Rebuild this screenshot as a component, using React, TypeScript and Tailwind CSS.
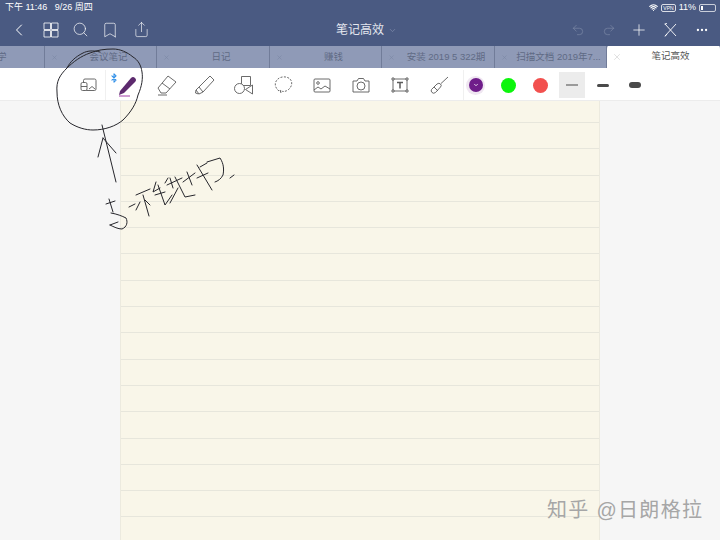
import { ChevronLeft, ChevronDown, Search, Bookmark, Share, Undo2, Redo2, Plus, Wifi, X, Ellipsis, Bluetooth } from 'lucide-react'

const tabs = [
  { title: '学', width: 'w-[45px]', align: 'justify-start', showClose: false },
  { title: '会议笔记', width: 'w-[112px]', align: 'justify-center', showClose: true },
  { title: '日记', width: 'w-[113px]', align: 'justify-center', showClose: true },
  { title: '赚钱', width: 'w-[112px]', align: 'justify-center', showClose: true },
  { title: '安装 2019 5 322期', width: 'w-[113px]', align: 'justify-center', showClose: true },
  { title: '扫描文档 2019年7...', width: 'w-[112px]', align: 'justify-center', showClose: true },
]

function Icon({ children, w = 24, h = 24 }: { children: React.ReactNode; w?: number; h?: number }) {
  return (
    <svg width={w} height={h} viewBox={`0 0 ${w} ${h}`} fill="none" stroke="#5a5a5a" strokeWidth="0.9" strokeLinejoin="round" className="shrink-0">
      {children}
    </svg>
  )
}

function Tools() {
  return (
    <div className="flex items-center h-full pl-[80px] pt-[2px]">
      <Icon w={17} h={14}>
        <rect x="3.500" y="1" width="12.500" height="11.500" rx="1.500" />
        <rect x="1" y="4.500" width="6" height="8" rx="1.500" fill="#fff" />
        <path d="M1 8.500h6M9 11l3-2.500 3 2.500" />
      </Icon>
      <div className="w-px h-[30px] bg-[#f0f0f0] ml-[8px]" />
      <div className="relative w-[38px] h-full flex items-center justify-center">
        <Bluetooth size={10} strokeWidth={2.5} className="absolute left-[3px] top-[3px] text-[#2f8fe8]" />
        <svg width="20" height="22" viewBox="0 0 20 22" className="mt-[2px] ml-[6px]">
          <path d="M2 16 L13 3 Q15 1 17 3 Q19 5 17 7 L6 18 L1 20 Z" fill="#5d2a6e" />
          <path d="M1 21h11" stroke="#a03ca8" strokeWidth="1" />
        </svg>
      </div>
      <div className="ml-[12px]">
        <Icon w={22} h={22}>
          <path d="M2 14 L12 2 L20 8 L10 19 H5 Z M6 9 L14 15" />
          <path d="M2 21h9" />
        </Icon>
      </div>
      <div className="ml-[17px]">
        <Icon w={20} h={22}>
          <path d="M1 16l3 4 4-2 11-12-4-4L4 13z M4 13l4 5 M1 16l-0.500 3 3 1" />
        </Icon>
      </div>
      <div className="ml-[19px]">
        <Icon w={20} h={20}>
          <rect x="7.500" y="1.500" width="9" height="9" />
          <circle cx="5.500" cy="13.500" r="5" fill="#fff" />
          <path d="M18.500 10 v9 l-7 -4.500z" fill="#fff" />
        </Icon>
      </div>
      <div className="ml-[20px]">
        <Icon w={20} h={20}>
          <path d="M5 16 C1 13 0 8 3 5 C6 1 13 1 16 4 C19 7 18 12 14 15 C11 17 8 17 6 15" strokeDasharray="2 1.400" />
          <path d="M6 15 l1 3" />
        </Icon>
      </div>
      <div className="ml-[19px]">
        <Icon w={18} h={15}>
          <rect x="1" y="1" width="16" height="13" rx="1" />
          <circle cx="5" cy="5" r="1.300" />
          <path d="M1 12l4-3 3 2 4-3 5 3" />
        </Icon>
      </div>
      <div className="ml-[21px]">
        <Icon w={18} h={16}>
          <path d="M1 4 h4 l1.500-2.500 h5 L13 4 h4 v11 H1z" />
          <circle cx="9" cy="9" r="4" />
        </Icon>
      </div>
      <div className="ml-[21px]">
        <Icon w={18} h={16}>
          <rect x="2" y="2" width="14" height="12" />
          <rect x="1" y="1" width="2" height="2" fill="#fff" />
          <rect x="15" y="1" width="2" height="2" fill="#fff" />
          <rect x="1" y="13" width="2" height="2" fill="#fff" />
          <rect x="15" y="13" width="2" height="2" fill="#fff" />
          <path d="M6 5.500h6M9 5.500v6" strokeWidth="1.500" />
        </Icon>
      </div>
      <div className="ml-[21px]">
        <Icon w={19} h={19}>
          <path d="M1.500 13.500 L7 8 Q9 6.500 10.500 8 Q12 9.500 10.500 11 L5.500 16.500 Q3.500 18 2 16.500 Q0.500 15 1.500 13.500z" />
          <path d="M4 11l4 4M11 7.500 L18 1" />
        </Icon>
      </div>
      <div className="w-px h-[30px] bg-[#f0f0f0] ml-[14px]" />
      <div className="ml-[2px] w-[19px] h-[19px] rounded-full bg-[#efe6f1] flex items-center justify-center">
        <div className="w-[14px] h-[14px] rounded-full bg-[#6f1d8a] flex items-center justify-center">
          <ChevronDown size={6} strokeWidth={3} className="text-white" />
        </div>
      </div>
      <div className="ml-[16px] w-[15px] h-[15px] rounded-full bg-[#0cf50c]" />
      <div className="ml-[17px] w-[15px] h-[15px] rounded-full bg-[#f2504e]" />
      <div className="ml-[11px] w-[26px] h-[26px] bg-[#ececec] flex items-center justify-center">
        <div className="w-[12px] h-[1.500px] bg-[#9a9a9a]" />
      </div>
      <div className="ml-[12px] w-[12px] h-[3px] rounded-sm bg-[#4a4a4a]" />
      <div className="ml-[20px] w-[12px] h-[6px] rounded-[3px] bg-[#4a4a4a]" />
    </div>
  )
}

function Ink() {
  return (
    <svg width="720" height="540" viewBox="0 0 720 540" fill="none" stroke="#26262c" strokeWidth="1" strokeLinecap="round" strokeLinejoin="round" className="absolute inset-0 pointer-events-none">
      <path d="M100 52 C92 50 87 51 83 53 C75 57 70 62 67 68 C60 75 56 81 57 92 C57 105 62 116 70 123 C78 128 86 130 93 130 C105 130 116 126 123 120 C131 112 136 104 138 95 C142 86 143 78 142 72 C141 65 138 60 133 57 C127 52 120 49 113 49 C105 49 97 50 90 53 C81 56 73 62 67 68" />
      <path d="M102 125 L116 182 M103 138 L98 157 M103 138 L116 153" />
      <path d="M109 199 L113 212 M106 204 L115 201 M111 213 C117 214 122 216 126 218 C128 222 127 227 122 229 C118 229 114 227 110 225 M110 225 L118 222" />
      <path d="M129 207 L135 204" />
      <path d="M136 195 L150 189 M143 195 L149 216 M140 202 L136 210 M145 200 L150 205" />
      <path d="M156 182 L153 192 L160 188 M155 195 L165 192 M158 185 L165 205 L172 195 M165 183 L168 178" />
      <path d="M170 178 L173 188 M167 185 L182 178 M175 177 L185 197 L195 195 M178 188 L170 203" />
      <path d="M187 172 L192 185 M183 182 L195 173 M197 165 L212 190 M200 167 L207 163 M197 178 L208 173" />
      <path d="M207 162 L220 158 C224 164 224 170 223 175 C221 179 218 181 215 182" />
      <path d="M230 178 L234 175" />
    </svg>
  )
}

export default function App() {
  return (
    <div className="relative w-[720px] h-[540px] overflow-hidden flex flex-col bg-[#f6f6f6]" style={{ fontFamily: '"Liberation Sans", "Noto Sans CJK SC", sans-serif' }}>
      <div className="h-[46px] bg-[#4a5a82] shrink-0 flex flex-col text-white">
        <div className="h-[15px] flex items-center justify-between px-[4px] text-[9px]">
          <span className="pl-[1px]">下午 11:46&nbsp;&nbsp;&nbsp;9/26 周四</span>
          <div className="flex items-center gap-[3px]">
            <Wifi size={9} strokeWidth={3} />
            <span className="border border-white/80 rounded-[2px] text-[5px] leading-[6px] px-[1px]">VPN</span>
            <span>11%</span>
            <div className="w-[17px] h-[8px] border border-white/70 rounded-[2px] p-[1px]">
              <div className="w-[2px] h-full bg-white" />
            </div>
          </div>
        </div>
        <div className="relative flex-1 flex items-center pb-[2px]">
          <ChevronLeft size={20} strokeWidth={1.200} className="ml-[9px] shrink-0" />
          <svg width="16" height="16" viewBox="0 0 16 16" fill="none" stroke="#fff" strokeWidth="0.800" className="ml-[14px] shrink-0">
            <path d="M1 1h6.500v6.500H1zM8.500 1H15v6.500H8.500zM1 8.500h6.500V15H1zM8.500 8.500H15V15H8.500z" />
          </svg>
          <Search size={17} strokeWidth={1} className="ml-[13px] shrink-0" />
          <Bookmark size={18} strokeWidth={0.900} className="ml-[12px] shrink-0" />
          <Share size={17} strokeWidth={0.900} className="ml-[14px] shrink-0" />
          <div className="absolute left-0 right-0 top-0 bottom-[2px] flex items-center justify-center text-[12px] text-[#e4e7ef]">
            <span className="relative">
              笔记高效
              <ChevronDown size={9} className="absolute -right-[13px] top-[5px] text-[#7d8aa9]" />
            </span>
          </div>
          <div className="ml-auto flex items-center pr-[11px]">
            <Undo2 size={14} strokeWidth={1} className="text-[#8490ad]" />
            <Redo2 size={14} strokeWidth={1} className="text-[#8490ad] ml-[17px]" />
            <Plus size={18} strokeWidth={1} className="ml-[14px]" />
            <svg width="13" height="14" viewBox="0 0 13 14" fill="none" stroke="#fff" strokeWidth="0.900" className="ml-[16px]">
              <path d="M1 1 L12 13 M12 1 L1 13 M0.500 1 L3 0.500 M3 11 L1 13.500" />
            </svg>
            <Ellipsis size={14} strokeWidth={2} className="ml-[18px]" />
          </div>
        </div>
      </div>
      <div className="h-[22px] shrink-0 flex bg-[#8f9ab7] text-[9.500px] text-[#5f6a85] overflow-hidden">
        {tabs.map(t => (
          <div key={t.title} className={`relative ${t.width} shrink-0 border-r border-[#717c99] flex items-center ${t.align} whitespace-nowrap`}>
            {t.showClose && <X size={7} className="absolute left-[6px] text-[#7a86a3]" />}
            <span className={t.showClose ? 'pl-[16px]' : '-ml-[3px]'}>{t.title}</span>
          </div>
        ))}
        <div className="relative flex-1 -mt-[1px] bg-white rounded-t-[4px] flex items-center justify-center text-[#555] pl-[14px]">
          <X size={10} strokeWidth={1} className="absolute left-[5px] text-[#b5b5b5]" />
          <span>笔记高效</span>
        </div>
      </div>
      <div className="h-[33px] shrink-0 bg-white border-b border-[#ececec]">
        <Tools />
      </div>
      <div className="flex-1 flex min-h-0 pl-[120px]">
        <div className="w-[480px] h-full bg-[#f9f6e9] border-x border-[#eceadf] flex flex-col pt-[21px]">
          {Array.from({ length: 17 }).map((_, i) => (
            <div key={i} className="h-[26.300px] shrink-0 border-t border-[#e7e6dc]" />
          ))}
        </div>
      </div>
      <Ink />
      <div className="absolute left-[547px] top-[497px] text-[20px] leading-[26px] text-[#a6a6a6] tracking-[1.300px] whitespace-nowrap">
        知乎 @日朗格拉
      </div>
    </div>
  )
}
